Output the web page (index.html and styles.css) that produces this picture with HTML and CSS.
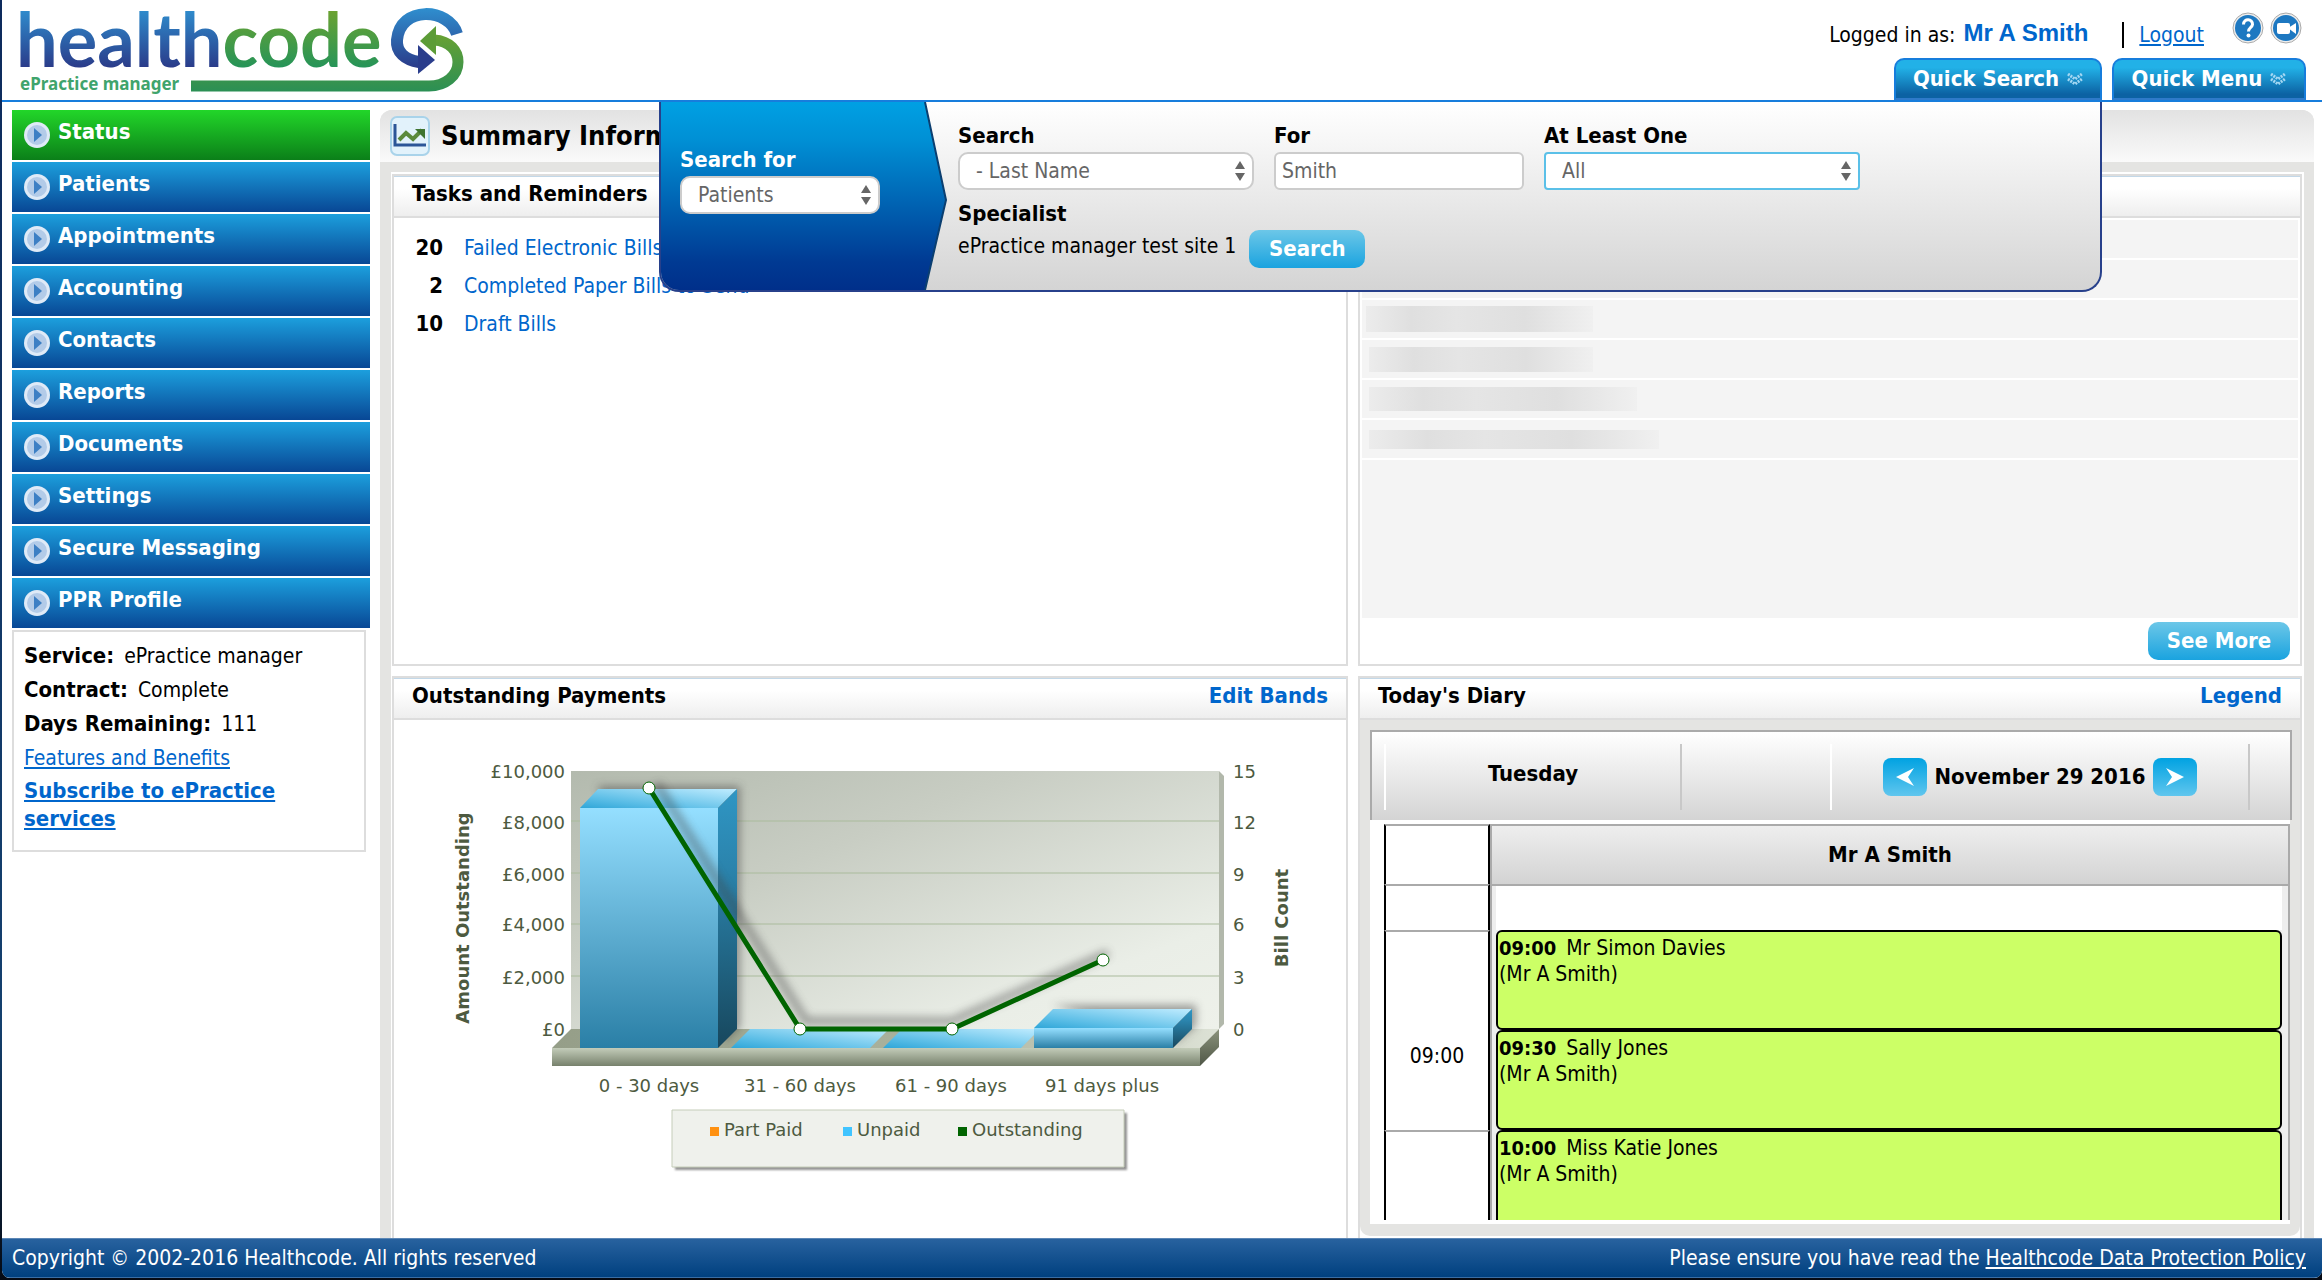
FILE: index.html
```html
<!DOCTYPE html>
<html lang="en">
<head>
<meta charset="utf-8">
<title>Healthcode ePractice manager</title>
<link rel="stylesheet" href="styles.css">
</head>
<body>
<svg class="defs" width="0" height="0" aria-hidden="true">
  <symbol id="nav-arrow" viewBox="0 0 26 26">
    <circle cx="13" cy="13" r="13" fill="#dfeaf7"/><circle cx="13" cy="13" r="10" fill="#b3cbe8"/>
    <path d="M10 6v14l8-7z" fill="#3d7fc4"/>
  </symbol>
  <symbol id="updown" viewBox="0 0 10 20">
    <path d="M5 0l5 8H0zM5 20l5-8H0z" fill="#666"/>
  </symbol>
  <symbol id="chevrons" viewBox="0 0 16 13">
    <path d="M1 1l7 5 7-5M1 6l7 5 7-5" fill="none" stroke="#a5d8f3" stroke-width="3" stroke-dasharray="2 1"/>
  </symbol>
</svg>
<div class="app">
  <header class="top">
    <svg class="logo" width="480" height="98" viewBox="0 0 480 98" role="img" aria-label="healthcode ePractice manager">
      <defs>
        <linearGradient id="lb" x1="0" y1="8" x2="0" y2="72" gradientUnits="userSpaceOnUse"><stop offset="0" stop-color="#2f8fcf"/><stop offset="1" stop-color="#2a3584"/></linearGradient>
        <linearGradient id="lg" x1="0" y1="8" x2="0" y2="72" gradientUnits="userSpaceOnUse"><stop offset="0" stop-color="#6fa32f"/><stop offset="1" stop-color="#20935c"/></linearGradient>
        <linearGradient id="ls" x1="0" y1="28" x2="0" y2="92" gradientUnits="userSpaceOnUse"><stop offset="0" stop-color="#6fa32f"/><stop offset="1" stop-color="#2a8f55"/></linearGradient>
      </defs>
      <text class="logo-word" x="14" y="67"><tspan fill="url(#lb)">health</tspan><tspan fill="url(#lg)">code</tspan></text>
      <text class="logo-tag" x="18" y="90">ePractice manager</text>
      <path d="M455 34C447 8 398 5 395 40C394 52 403 60 417 62" fill="none" stroke="url(#lb)" stroke-width="12"/>
      <path d="M416 45l17 15-17 14z" fill="#2a3d8c"/>
      <path d="M432 40C448 41 456 51 456 62C456 76 443 86 427 86L189 86" fill="none" stroke="url(#ls)" stroke-width="11"/>
      <path d="M434 26v29l-16-14z" fill="#5c9c37"/>
    </svg>
    <div class="account">
      <div class="login">
        <span>Logged in as:</span><strong class="user">Mr A Smith</strong><span class="bar"></span><a class="logout" href="#">Logout</a>
        <a class="round" href="#" aria-label="Help"><svg width="32" height="32" viewBox="0 0 32 32"><circle cx="16" cy="16" r="15" fill="#eee" stroke="#aaa"/><circle cx="16" cy="16" r="13" fill="#1d78c1"/><path d="M11.500 12.500C11.500 6 21 6.500 20.500 12.500C20 16 16.500 15.500 16.500 19.500" fill="none" stroke="#fff" stroke-width="3"/><circle cx="16.500" cy="23.500" r="2" fill="#fff"/></svg></a>
        <a class="round" href="#" aria-label="Video"><svg width="32" height="32" viewBox="0 0 32 32"><circle cx="16" cy="16" r="15" fill="#eee" stroke="#aaa"/><circle cx="16" cy="16" r="13" fill="#1d78c1"/><rect x="7" y="11" width="13" height="11" rx="2" fill="#fff"/><path d="M18 16l8-5v11z" fill="#fff"/></svg></a>
      </div>
      <div class="tabs">
        <button class="tab search-tab">Quick Search <svg width="16" height="13"><use href="#chevrons"/></svg></button>
        <button class="tab menu-tab">Quick Menu <svg width="16" height="13"><use href="#chevrons"/></svg></button>
      </div>
    </div>
    <form class="quick">
      <svg class="quick-shape" width="290" height="188" viewBox="0 0 290 188" aria-hidden="true">
        <defs><linearGradient id="qb" x1="0" y1="0" x2="0" y2="1"><stop offset="0" stop-color="#00a0e3"/><stop offset=".2" stop-color="#0090d5"/><stop offset=".85" stop-color="#003a93"/><stop offset="1" stop-color="#002f8a"/></linearGradient></defs>
        <path d="M0 0H264L285 98L264 188H0z" fill="url(#qb)"/><path d="M264 0L285 98L264 188" fill="none" stroke="#0b3f70" stroke-width="2"/>
      </svg>
      <div class="quick-type">
        <label for="kind">Search for</label>
        <span class="pick"><select id="kind"><option>Patients</option></select><svg class="ud" width="10" height="20"><use href="#updown"/></svg></span>
      </div>
      <div class="quick-fields">
        <div class="fields">
          <div class="f-by"><label for="by">Search</label><span class="pick"><select id="by"><option>- Last Name</option></select><svg class="ud" width="10" height="20"><use href="#updown"/></svg></span></div>
          <div class="f-for"><label for="for">For</label><input id="for" type="text" value="Smith"></div>
          <div class="f-one"><label for="one">At Least One</label><span class="pick focus"><select id="one"><option>All</option></select><svg class="ud" width="10" height="20"><use href="#updown"/></svg></span></div>
        </div>
        <strong class="spec">Specialist</strong>
        <div class="site"><span>ePractice manager test site 1</span><button class="btn" type="button">Search</button></div>
      </div>
    </form>
  </header>

  <div class="body">
    <aside class="side">
      <nav class="nav">
        <a class="on" href="#"><svg width="26" height="26"><use href="#nav-arrow"/></svg><span>Status</span></a>
        <a href="#"><svg width="26" height="26"><use href="#nav-arrow"/></svg><span>Patients</span></a>
        <a href="#"><svg width="26" height="26"><use href="#nav-arrow"/></svg><span>Appointments</span></a>
        <a href="#"><svg width="26" height="26"><use href="#nav-arrow"/></svg><span>Accounting</span></a>
        <a href="#"><svg width="26" height="26"><use href="#nav-arrow"/></svg><span>Contacts</span></a>
        <a href="#"><svg width="26" height="26"><use href="#nav-arrow"/></svg><span>Reports</span></a>
        <a href="#"><svg width="26" height="26"><use href="#nav-arrow"/></svg><span>Documents</span></a>
        <a href="#"><svg width="26" height="26"><use href="#nav-arrow"/></svg><span>Settings</span></a>
        <a href="#"><svg width="26" height="26"><use href="#nav-arrow"/></svg><span>Secure Messaging</span></a>
        <a href="#"><svg width="26" height="26"><use href="#nav-arrow"/></svg><span>PPR Profile</span></a>
      </nav>
      <div class="info">
        <p><b>Service:</b> ePractice manager</p>
        <p><b>Contract:</b> Complete</p>
        <p><b>Days Remaining:</b> 111</p>
        <p><a href="#">Features and Benefits</a></p>
        <p class="sub"><a href="#"><b>Subscribe to ePractice services</b></a></p>
      </div>
    </aside>

    <main class="main">
      <h1 class="title">
        <svg width="40" height="40" viewBox="0 0 40 40"><rect x="1" y="1" width="38" height="38" rx="6" fill="#e2f2fb" stroke="#a9d3ea" stroke-width="2"/><path d="M5 8v21h31" fill="none" stroke="#2b5597" stroke-width="3"/><path d="M9 24l7-7 7 6 9-9" fill="none" stroke="#5b8a3c" stroke-width="4"/><path d="M25 13h10v10z" fill="#3f7430"/></svg>
        Summary Information
      </h1>
      <div class="panels">
        <section class="panel">
          <h2>Tasks and Reminders</h2>
          <ul class="tasks">
            <li><b>20</b><a href="#">Failed Electronic Bills</a></li>
            <li><b>2</b><a href="#">Completed Paper Bills to Send</a></li>
            <li><b>10</b><a href="#">Draft Bills</a></li>
          </ul>
        </section>
        <section class="panel">
          <h2>Messages</h2>
          <div class="list">
            <div class="row"></div><div class="row"></div>
            <div class="row"><i class="r1"></i></div>
            <div class="row"><i class="r2"></i></div>
            <div class="row"><i class="r3"></i></div>
            <div class="row"><i class="r4"></i></div>
            <div class="rest"></div>
          </div>
          <div class="more"><button class="btn wide" type="button">See More</button></div>
        </section>
        <section class="panel">
          <h2>Outstanding Payments <a href="#">Edit Bands</a></h2>
          <svg class="chart" width="951" height="518" viewBox="395 720 951 518" role="img" aria-label="Outstanding payments chart">
            <defs>
              <linearGradient id="wall" x1="0" y1="0" x2="1" y2="1"><stop offset="0" stop-color="#b3baae"/><stop offset=".35" stop-color="#c8cdc3"/><stop offset=".8" stop-color="#eaeee7"/><stop offset="1" stop-color="#eef1ea"/></linearGradient>
              <linearGradient id="front" x1="0" y1="0" x2="0" y2="1"><stop offset="0" stop-color="#95dfff"/><stop offset="1" stop-color="#2a7fa6"/></linearGradient>
              <linearGradient id="lid" x1="0" y1="1" x2="1" y2="0"><stop offset="0" stop-color="#2fa6d8"/><stop offset=".3" stop-color="#5abde6"/><stop offset="1" stop-color="#c0ecff"/></linearGradient>
              <linearGradient id="edge" x1="0" y1="0" x2="0" y2="1"><stop offset="0" stop-color="#2f96c4"/><stop offset=".3" stop-color="#2b84ad"/><stop offset="1" stop-color="#17475d"/></linearGradient>
              <linearGradient id="base" x1="0" y1="0" x2="0" y2="1"><stop offset="0" stop-color="#c3ccb9"/><stop offset="1" stop-color="#77816c"/></linearGradient>
              <linearGradient id="floor" x1="0" y1="0" x2="1" y2="0"><stop offset="0" stop-color="#959e88"/><stop offset=".6" stop-color="#acb49f"/><stop offset="1" stop-color="#dde2d6"/></linearGradient>
              <linearGradient id="end" x1="0" y1="0" x2="0" y2="1"><stop offset="0" stop-color="#8b937c"/><stop offset="1" stop-color="#4f5646"/></linearGradient>
              <filter id="glow" x="-20%" y="-100%" width="150%" height="300%"><feGaussianBlur stdDeviation="4"/></filter>
              <filter id="soft"><feGaussianBlur stdDeviation="1"/></filter>
            </defs>
            <path d="M571 771h648v258H571z" fill="url(#wall)"/>
            <path d="M1219 771l5 5v248l-5 5z" fill="#b2b8ab"/>
            <path d="M571 821h648M571 873h648M571 924h648M571 976h648" stroke="#aabb9c" stroke-width="1"/>
            <path d="M571 1029h648l-19 19H552z" fill="url(#floor)"/>
            <path d="M552 1048h648v18H552z" fill="url(#base)"/>
            <path d="M1200 1048l19-19v18l-19 19z" fill="url(#end)"/>
            <path d="M597 786h143v241l-15 15zM1052 1005h144v21l-20 16z" fill="#444" opacity=".5" filter="url(#glow)"/>
            <path d="M580 808h138v240H580z" fill="url(#front)"/><path d="M580 808l18-19h139l-19 19z" fill="url(#lid)"/><path d="M718 808l19-19v240l-19 19z" fill="url(#edge)"/>
            <path d="M731 1048l19-19h139l-19 19z" fill="url(#lid)"/>
            <path d="M883 1048l19-19h138l-19 19z" fill="url(#lid)"/>
            <path d="M1034 1028h139v20h-139z" fill="url(#front)"/><path d="M1034 1028l19-19h139l-19 19z" fill="url(#lid)"/><path d="M1173 1028l19-19v20l-19 19z" fill="url(#edge)"/>
            <path d="M657 784L806 1021H952L1108 953" fill="none" stroke="#444" stroke-width="8" opacity=".45" filter="url(#glow)"/>
            <path d="M649 788L800 1029H952L1103 960" fill="none" stroke="#006400" stroke-width="5"/>
            <g fill="#fff" stroke="#006400" stroke-width="1"><circle cx="649" cy="788" r="6"/><circle cx="800" cy="1029" r="6"/><circle cx="952" cy="1029" r="6"/><circle cx="1103" cy="960" r="6"/></g>
            <g class="lab" text-anchor="end"><text x="565" y="778">£10,000</text><text x="565" y="829">£8,000</text><text x="565" y="881">£6,000</text><text x="565" y="931">£4,000</text><text x="565" y="984">£2,000</text><text x="565" y="1036">£0</text></g>
            <g class="lab"><text x="1233" y="778">15</text><text x="1233" y="829">12</text><text x="1233" y="881">9</text><text x="1233" y="931">6</text><text x="1233" y="984">3</text><text x="1233" y="1036">0</text></g>
            <g class="lab" text-anchor="middle"><text x="649" y="1092">0 - 30 days</text><text x="800" y="1092">31 - 60 days</text><text x="951" y="1092">61 - 90 days</text><text x="1102" y="1092">91 days plus</text></g>
            <g class="axis" text-anchor="middle"><text transform="translate(469 918) rotate(-90)">Amount Outstanding</text><text transform="translate(1288 918) rotate(-90)">Bill Count</text></g>
            <path d="M675 1113h452v57H675z" fill="#777" opacity=".8" filter="url(#soft)"/>
            <path d="M672 1110h452v57H672z" fill="#eff1ec" stroke="#c5cdb9" stroke-width="1"/>
            <path d="M710 1127h9v9h-9z" fill="#ff9111"/><path d="M843 1127h9v9h-9z" fill="#40c4ff"/><path d="M958 1127h9v9h-9z" fill="#006400"/>
            <g class="lab"><text x="724" y="1136">Part Paid</text><text x="857" y="1136">Unpaid</text><text x="972" y="1136">Outstanding</text></g>
          </svg>
        </section>
        <section class="panel">
          <h2>Today's Diary <a href="#">Legend</a></h2>
          <div class="diary">
            <div class="diary-head">
              <div class="day">Tuesday</div>
              <div class="date">
                <button class="step" type="button" aria-label="Previous day"><svg width="20" height="20" viewBox="0 0 20 20"><path d="M19 1L1 10l18 9-6-9z" fill="#fff"/></svg></button>
                <span>November 29 2016</span>
                <button class="step" type="button" aria-label="Next day"><svg width="20" height="20" viewBox="0 0 20 20"><path d="M1 1l18 9-18 9 6-9z" fill="#fff"/></svg></button>
              </div>
            </div>
            <div class="diary-body">
              <div class="clip">
              <table>
                <thead><tr class="h-who"><th class="time"></th><th class="who">Mr A Smith</th></tr></thead>
                <tbody>
                  <tr class="h-gap"><td class="time"></td><td class="slot"><div class="free"></div></td></tr>
                  <tr class="h-hour"><td class="time">09:00</td><td class="slot"><div class="appt"><b>09:00</b> Mr Simon Davies<br>(Mr A Smith)</div><div class="appt"><b>09:30</b> Sally Jones<br>(Mr A Smith)</div></td></tr>
                  <tr class="h-hour"><td class="time"></td><td class="slot"><div class="appt"><b>10:00</b> Miss Katie Jones<br>(Mr A Smith)</div></td></tr>
                </tbody>
              </table>
              </div>
            </div>
          </div>
        </section>
      </div>
    </main>
  </div>
  <footer class="foot">
    <span>Copyright © 2002-2016 Healthcode. All rights reserved</span>
    <span>Please ensure you have read the <a href="#">Healthcode Data Protection Policy</a></span>
  </footer>
</div>
</body>
</html>
```
FILE: styles.css
```css
* { box-sizing: border-box; }
body {
  margin: 0;
  background: linear-gradient(#0d2a5c 0, #14406e 80%, #050a14 100%);
  font: 21px/26px "DejaVu Sans Condensed", "Noto Sans", sans-serif;
  color: #000;
}
a { color: #06c; }
b, strong, h2, th, label { font-size: 22px; }
button, input, select { font: inherit; margin: 0; }
h1, h2, p, ul { margin: 0; padding: 0; }
.defs { position: absolute; }
.app {
  min-height: calc(100vh - 2px);
  margin: 0 0 2px 2px;
  display: flex;
  flex-direction: column;
  background: #fff;
  border-radius: 0 0 8px 8px;
  overflow: hidden;
}

/* header */
.top {
  position: relative;
  display: flex;
  justify-content: space-between;
  height: 102px;
  border-bottom: 2px solid #177ddc;
}
.logo { flex: none; overflow: visible; }
.logo-word { font: 700 74px Lato, sans-serif; }
.logo-tag { font: 700 17px "Noto Sans", sans-serif; fill: #3fa46c; }
.account { display: flex; flex-direction: column; justify-content: space-between; align-items: flex-end; padding: 12px 16px 0 0; }
.login { display: flex; align-items: center; height: 46px; gap: 6px; padding-right: 4px; }
.login svg { display: block; }
.round { align-self: flex-start; }
.user { font: bold 24px/30px "Liberation Sans", Arial, sans-serif; color: #06c; margin-left: 2px; padding-bottom: 4px; }
.bar { width: 2px; height: 26px; background: #000; margin: 0 9px 0 28px; }
.logout { margin-right: 22px; }
.tabs { display: flex; gap: 10px; }
.tab {
  height: 42px;
  border: 2px solid #177ddc;
  border-bottom-color: #2f7ac9;
  border-radius: 10px 10px 0 0;
  background: linear-gradient(#22b1e7 20%, #0c62a3 90%);
  color: #fff;
  font-weight: bold;
  font-size: 22px;
  padding: 0;
  display: flex;
  align-items: center;
  justify-content: center;
  gap: 8px;
}
.search-tab { width: 208px; }
.menu-tab { width: 194px; }

/* quick search drop-down */
.quick {
  position: absolute;
  z-index: 2;
  top: 102px;
  right: 220px;
  width: 1443px;
  height: 190px;
  display: flex;
  border: 2px solid #27408b;
  border-top: 0;
  border-radius: 0 0 20px 20px;
  background: linear-gradient(#fff, #f7f7f7 20%, #d4d4d4);
  overflow: hidden;
}
.quick-shape { position: absolute; left: 0; top: 0; }
.quick label, .spec { display: block; font-weight: bold; line-height: 32px; }
.quick-type { position: relative; width: 200px; margin: 42px 78px 0 19px; }
.quick-type label { color: #fff; }
.quick-fields { padding-top: 18px; }
.fields { display: flex; gap: 20px; }
.f-by { width: 296px; }
.f-for { width: 250px; }
.f-one { width: 316px; }
.pick { position: relative; display: block; }
.pick select, .quick input {
  appearance: none;
  display: block;
  width: 100%;
  height: 38px;
  padding: 0 16px;
  border: 2px solid #ccc;
  border-radius: 10px;
  background: #fff;
  color: #666;
}
.quick input { padding: 0 6px; border-radius: 6px; }
.pick.focus select { border-color: #5bc0e8; border-radius: 4px; }
.ud { position: absolute; right: 9px; top: 9px; pointer-events: none; }
.spec { padding-top: 8px; }
.site { display: flex; align-items: flex-start; gap: 13px; line-height: 32px; }
.btn {
  width: 116px;
  height: 38px;
  border: 0;
  border-radius: 10px;
  background: linear-gradient(#6cc7e8, #1aa3df);
  color: #fff;
  font-weight: bold;
  font-size: 22px;
}
.wide { width: 142px; }

/* columns */
.body { flex: 1; display: flex; gap: 10px; padding: 8px 8px 0 10px; }
.side { flex: none; width: 358px; }
.nav { display: flex; flex-direction: column; gap: 2px; }
.nav a {
  display: flex;
  align-items: flex-start;
  gap: 8px;
  height: 50px;
  padding: 12px;
  background: linear-gradient(#1c9fdd, #084795);
  color: #fff;
  font-weight: bold;
  font-size: 22px;
  text-decoration: none;
}
.nav a.on { background: linear-gradient(#22d629, #0b7f19); }
.nav span { line-height: 20px; }
.info { width: 354px; height: 222px; margin-top: 2px; padding: 7px 10px; border: 2px solid #ddd; }
.info p { line-height: 34px; }
.info b { margin-right: 4px; }
.info .sub { line-height: 28px; padding-top: 2px; }

/* main area */
.main {
  flex: 1;
  display: flex;
  flex-direction: column;
  min-width: 0;
  background: #e4e4e2;
  border-radius: 12px 12px 0 0;
  overflow: hidden;
}
.title {
  display: flex;
  align-items: center;
  gap: 11px;
  height: 52px;
  padding: 0 10px;
  background: linear-gradient(#e2e2e2, #fafafa);
  font-size: 27px;
}
.panels {
  flex: 1;
  display: grid;
  grid-template-columns: 956fr 944fr;
  grid-template-rows: 492px auto;
  gap: 10px;
  margin: 10px 10px 0 11px;
  padding: 2px 2px 0 1px;
  background: #fff;
}
.panel { display: flex; flex-direction: column; border: 2px solid #ddd; min-width: 0; }
.panel:nth-child(n+3) { border-bottom: 0; }
.panel h2 {
  display: flex;
  justify-content: space-between;
  height: 42px;
  padding: 4px 18px;
  border-top: 1px solid #c3d8e8;
  border-bottom: 2px solid #ddd;
  background: linear-gradient(#fff 30%, #eee);
}
.panel h2 a { text-decoration: none; }
.tasks { list-style: none; padding-top: 11px; }
.tasks li { display: flex; gap: 21px; line-height: 38px; }
.tasks b { width: 49px; text-align: right; }
.tasks a { text-decoration: none; }
.list { flex: 1; display: flex; flex-direction: column; gap: 2px; padding: 2px 2px 0; }
.row { height: 38px; background: #f4f4f4; display: flex; padding-left: 4px; align-items: center; }
.rest { flex: 1; background: #f4f4f4; }
.row i { margin-left: 3px; background: linear-gradient(90deg, #ececec, #dfdfdf 20%, #e5e5e5 40%, #dfdfdf 70%, #f0f0f0); }
.row .r1 { width: 227px; height: 26px; margin-left: 0; }
.r2 { width: 224px; height: 25px; }
.r3 { width: 268px; height: 24px; }
.r4 { width: 290px; height: 19px; }
.more { display: flex; justify-content: flex-end; padding: 4px 10px; height: 46px; }

.chart { display: block; margin: 0 auto; flex: none; }
.lab { font: 18px "DejaVu Sans", sans-serif; fill: #4d5a40; }
.axis { font: bold 18px "DejaVu Sans", sans-serif; fill: #4d5a40; }

/* diary */
.diary { height: 516px; padding: 10px 8px 12px 10px; background: #e4e4e2; border-radius: 0 0 10px 10px; }
.diary-head {
  display: flex;
  justify-content: space-between;
  height: 90px;
  padding: 12px 40px 10px 12px;
  border: 2px solid #aaa;
  border-bottom: 0;
  background: linear-gradient(#fff, #d4d4d4);
  font-weight: bold;
  font-size: 22px;
}
.day, .date { height: 66px; border: 2px solid #fff; border-width: 0 2px; border-right-color: #c8c8c8; display: flex; justify-content: center; align-items: center; }
.day { width: 298px; padding-bottom: 6px; }
.date { width: 420px; gap: 8px; }
.step { width: 44px; height: 38px; border: 0; padding: 0; border-radius: 8px; background: linear-gradient(#00a2e2, #60c6ee); }
.step svg { display: block; margin: 0 auto; }
.diary-body { height: 404px; margin-right: 2px; padding: 4px 0 4px 14px; background: #fff; }
.clip { height: 396px; overflow: hidden; }
.diary table { width: 100%; border-collapse: separate; border-spacing: 0; table-layout: fixed; }
.diary th, .diary td { padding: 0; border-top: 2px solid #aaa; }
.time { width: 106px; border-left: 2px solid #000; border-right: 2px solid #000; text-align: center; }
.who { border: 2px solid #aaa; border-bottom: 0; background: linear-gradient(#eee, #d3d3d3); }
.h-who { height: 60px; }
.h-gap { height: 46px; }
.h-hour { height: 200px; }
.diary .h-hour .time { padding-top: 50px; }
.diary td.slot { border-left: 2px solid #aaa; border-right: 2px solid #aaa; padding: 0 6px 0 4px; background: #eee; vertical-align: top; }
.diary .h-hour td.slot { border-top: 0; }
.free { height: 44px; background: #fff; }
.appt { height: 100px; padding: 3px 1px; border: 2px solid #000; border-radius: 6px; background: #cf6; }
.appt b { font-size: 20px; margin-right: 4px; }

.foot {
  display: flex;
  justify-content: space-between;
  align-items: center;
  height: 40px;
  padding: 0 16px 0 10px;
  border-top: 1px solid #5b86b5;
  border-bottom: 1px solid #3a6ea5;
  background: linear-gradient(#28629f, #00407f);
  color: #fff;
}
.foot a { color: #fff; }
```
